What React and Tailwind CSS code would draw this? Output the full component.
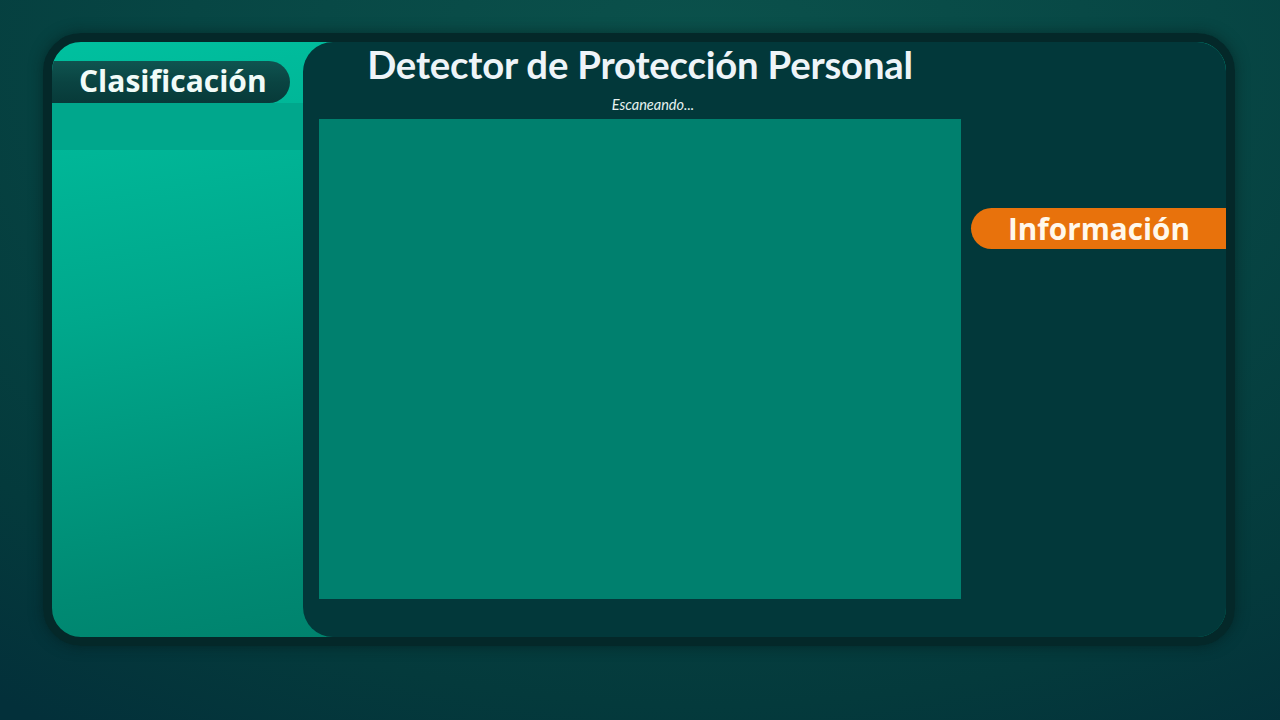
export default function App() {
  return (
    <div className="w-[1280px] h-[720px] overflow-hidden bg-[radial-gradient(ellipse_90%_110%_at_55%_10%,#0b524c_0%,#074644_45%,#043a3c_80%,#03303a_100%)] pt-[33px] pl-[43px]">
      <div className="w-[1192px] h-[613px] rounded-[38px] border-[9px] border-[#042829] overflow-hidden flex bg-[linear-gradient(170deg,#00c09f_0%,#00a88c_35%,#008a73_70%,#007563_100%)] shadow-[0_0_14px_rgba(0,20,20,0.5)]">
        {/* Left column */}
        <div className="w-[251px] shrink-0 pt-[19px] flex flex-col">
          <div className="h-[42px] w-[238px] rounded-r-full bg-[linear-gradient(180deg,#0f5450_0%,#0a4442_50%,#073a39_100%)] flex items-center pl-[27px] pb-[2px]">
            <span className="text-[30px] font-bold text-[#f1fbf8] leading-none" style={{ fontFamily: '"Open Sans", "Noto Sans", sans-serif' }}>
              Clasificación
            </span>
          </div>
          <div className="h-[47px] bg-[#00a78c]" />
        </div>
        {/* Dark panel */}
        <div className="flex-1 rounded-l-[30px] bg-[#02383a] flex">
          <div className="w-[658px] pl-[16px] flex flex-col">
            <div className="h-[46px] mt-[-1px] mb-[3px] flex items-center justify-center">
              <span className="text-[38.3px] font-bold text-[#eef4f8] leading-none tracking-[-0.2px]" style={{ fontFamily: 'Lato, "Open Sans", sans-serif' }}>
                Detector de Protección Personal
              </span>
            </div>
            <div className="h-[29px] flex items-center justify-center pl-[26px] pt-[2px]">
              <span className="text-[14.5px] italic text-[#e6f2f0] leading-none" style={{ fontFamily: 'Lato, "Open Sans", sans-serif' }}>
                Escaneando...
              </span>
            </div>
            <div className="w-[642px] h-[480px] bg-[#00806e]" />
          </div>
          <div className="flex-1 pt-[166px] pl-[10px]">
            <div className="h-[41px] rounded-l-full bg-[#e8720c] flex items-center pl-[37px]">
              <span className="text-[29.7px] font-bold text-[#fff8ec] leading-none" style={{ fontFamily: '"Open Sans", "Noto Sans", sans-serif' }}>
                Información
              </span>
            </div>
          </div>
        </div>
      </div>
    </div>
  );
}
